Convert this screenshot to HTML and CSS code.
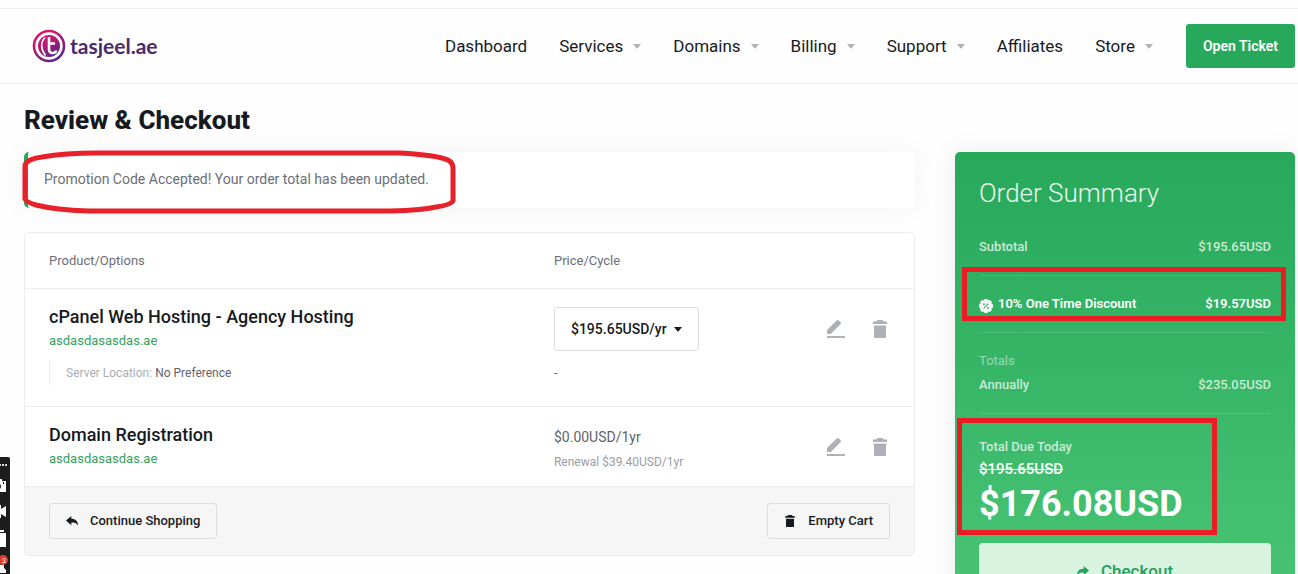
FILE: index.html
```html
<!DOCTYPE html>
<html lang="en">
<head>
<meta charset="utf-8">
<title>Review &amp; Checkout</title>
<link rel="stylesheet" href="styles.css">
</head>
<body>
<svg class="sprite" aria-hidden="true">
  <symbol id="caret" viewBox="0 0 8 5"><path d="M0 0h8L4.6 4.2a.8.8 0 0 1-1.2 0z"/></symbol>
  <symbol id="edit" viewBox="0 0 18 18"><path d="M0 16h18v2H0zM0 13.500v-3.400L9.700.5a1.500 1.500 0 0 1 2.100 0l1.700 1.700a1.500 1.500 0 0 1 0 2.100L3.800 14H.5a.5.5 0 0 1-.5-.5z"/></symbol>
  <symbol id="trash" viewBox="0 0 14 18"><path d="M0 1.500h3L4.500 0h5L11 1.500h3V4H0zM1 5.500h12V17a1 1 0 0 1-1 1H2a1 1 0 0 1-1-1z"/></symbol>
  <symbol id="reply" viewBox="0 0 12 10"><path d="M0 4.600 5.300 0v2.700C9.500 2.700 12 5 12 9.500 10.500 7 8.500 6.500 5.300 6.500v2.800z"/></symbol>
  <symbol id="badge" viewBox="0 0 14 14"><path fill="#fff" d="M5.600 0h2.800l.8 1.500 1.700-.5 2 2-.5 1.800 1.600.8v2.800l-1.600.8.5 1.800-2 2-1.700-.5-.8 1.500H5.600l-.8-1.500-1.700.5-2-2 .5-1.800L0 8.400V5.600l1.600-.8L1.100 3l2-2 1.700.5z"/><path stroke="#32b062" stroke-width="1.200" d="m4.700 9.300 4.600-4.600"/><circle cx="5" cy="5.200" r="1" fill="#32b062"/><circle cx="9" cy="8.900" r="1" fill="#32b062"/></symbol>
</svg>

<header class="topbar">
  <a class="logo" href="#">
    <svg class="logo-mark" viewBox="0 0 34 34" aria-hidden="true">
      <defs><linearGradient id="brand" x1="0" y1="0" x2=".6" y2="1"><stop offset="0" stop-color="#e5156f"/><stop offset=".5" stop-color="#b01c75"/><stop offset="1" stop-color="#5e2488"/></linearGradient></defs>
      <circle cx="17" cy="17" r="15" fill="#fff" stroke="url(#brand)" stroke-width="2.600"/>
      <circle cx="17" cy="17" r="11" fill="url(#brand)"/>
      <path d="M13 8.500C8.500 13 8.500 20 13.500 26.500" fill="none" stroke="#fff" stroke-width="1.600"/>
      <path d="M17 8v12q0 4 3.500 4T24 21.500M17 14.500h6" fill="none" stroke="#fff" stroke-width="2.600"/>
    </svg>
    <span>tasjeel.ae</span>
  </a>
  <nav class="menu">
    <a href="#">Dashboard</a>
    <a href="#">Services<svg class="caret"><use href="#caret"/></svg></a>
    <a href="#">Domains<svg class="caret"><use href="#caret"/></svg></a>
    <a href="#">Billing<svg class="caret"><use href="#caret"/></svg></a>
    <a href="#">Support<svg class="caret"><use href="#caret"/></svg></a>
    <a href="#">Affiliates</a>
    <a href="#">Store<svg class="caret"><use href="#caret"/></svg></a>
  </nav>
  <button class="ticket" type="button">Open Ticket</button>
</header>

<main class="page">
  <h1>Review &amp; Checkout</h1>
  <div class="columns">
    <section class="cart">
      <div class="alert" role="status">Promotion Code Accepted! Your order total has been updated.
        <svg class="mark mark-alert" viewBox="0 0 434 64" aria-hidden="true"><path d="M76 3H378Q414 5 426 10Q431 13 431 18V51Q429 55 414 57Q394 61 360 61H66Q34 60 14 55Q4 52 3 49V15Q5 9 20 7Q42 3 76 3Z"/></svg>
      </div>
      <div class="panel">
        <table>
          <thead><tr><th class="col-product">Product/Options</th><th>Price/Cycle</th><th class="col-actions"></th></tr></thead>
          <tbody>
            <tr>
              <td>
                <div class="name">cPanel Web Hosting - Agency Hosting</div>
                <a class="domain" href="#">asdasdasasdas.ae</a>
                <div class="option">Server Location: <span>No Preference</span></div>
              </td>
              <td>
                <div class="cycle"><select aria-label="Billing cycle"><option>$195.65USD/yr</option></select><svg class="caret"><use href="#caret"/></svg></div>
                <div class="option-price">-</div>
              </td>
              <td><div class="actions">
                <button type="button" aria-label="Edit"><svg class="edit"><use href="#edit"/></svg></button>
                <button type="button" aria-label="Remove"><svg class="trash"><use href="#trash"/></svg></button>
              </div></td>
            </tr>
            <tr class="compact">
              <td>
                <div class="name">Domain Registration</div>
                <a class="domain" href="#">asdasdasasdas.ae</a>
              </td>
              <td><div class="price">$0.00USD/1yr</div><div class="renewal">Renewal $39.40USD/1yr</div></td>
              <td><div class="actions">
                <button type="button" aria-label="Edit"><svg class="edit"><use href="#edit"/></svg></button>
                <button type="button" aria-label="Remove"><svg class="trash"><use href="#trash"/></svg></button>
              </div></td>
            </tr>
          </tbody>
        </table>
        <div class="panel-foot">
          <button type="button"><svg class="reply"><use href="#reply"/></svg>Continue Shopping</button>
          <button type="button"><svg class="bin"><use href="#trash"/></svg>Empty Cart</button>
        </div>
      </div>
    </section>

    <aside class="summary">
      <h2>Order Summary</h2>
      <div class="line"><span>Subtotal</span><span>$195.65USD</span></div>
      <div class="line discount"><span><svg class="badge"><use href="#badge"/></svg>10% One Time Discount</span><span>$19.57USD</span></div>
      <div class="totals">
        <div class="label">Totals</div>
        <div class="line"><span>Annually</span><span>$235.05USD</span></div>
      </div>
      <div class="due">
        <div>Total Due Today</div>
        <s>$195.65USD</s>
        <strong>$176.08USD</strong>
      </div>
      <button class="checkout" type="button"><svg class="forward"><use href="#reply"/></svg>Checkout</button>
      <div class="mark box-discount"></div>
      <div class="mark box-due"></div>
    </aside>
  </div>
</main>

<div class="recorder" aria-hidden="true">
  <svg viewBox="0 0 10 117">
    <path fill="#1c1c1c" d="M0 0h8a2 2 0 0 1 2 2v115H0z"/>
    <path fill="#ddd" d="M0 7h1v2H0zM2 7h2v2H2zM5 7h2v2H5z"/>
    <path fill="#fff" d="M0 22h2v2h4v11H0v-3q2-2.500 0-5zM0 48h1v4l5-3v11l-5-3v4H0zM0 73h4v2H0zM0 76h6v14H0zM0 108l4-1v4l2 2v3H0z"/>
    <path fill="#1c1c1c" d="M3 25h1v2H3z"/>
    <circle cx="3" cy="103" r="5" fill="#e8392f"/>
    <text x="2" y="106">3</text>
  </svg>
</div>
</body>
</html>
```

FILE: styles.css
```css
* { box-sizing: border-box; }

body {
  margin: 0;
  height: 100vh;
  overflow: hidden;
  background: #fefefe;
  color: #161a1e;
  font: 14px/20px Roboto, "Liberation Sans", sans-serif;
}

button, select { font: inherit; color: inherit; cursor: pointer; }
a { color: inherit; text-decoration: none; }
svg { display: block; flex: none; }
.sprite { position: absolute; width: 0; height: 0; }
.caret { width: 8px; height: 5px; fill: #aeb2b9; }

.topbar {
  display: flex;
  align-items: center;
  margin-top: 8px;
  padding: 15px 3px 15px 32px;
  border: solid #ededed;
  border-width: 1px 0;
}
.logo {
  display: flex;
  align-items: center;
  gap: 4px;
  margin-right: auto;
  color: #4a2a6c;
  font: 700 21px/24px Lato, sans-serif;
}
.logo-mark { width: 34px; height: 34px; }
.menu { display: flex; gap: 32px; margin-right: 33px; font-size: 17px; }
.menu a { display: flex; align-items: center; gap: 10px; }
.ticket {
  height: 44px;
  padding: 0 17px;
  border: 0;
  border-radius: 3px;
  background: #27a85b;
  color: #fff;
  font-weight: 600;
}

.page { padding: 20px 3px 0 24px; }
h1 { margin: 0 0 16px; font-size: 26px; line-height: 32px; font-weight: 800; }
.columns { display: grid; grid-template-columns: 1fr 340px; gap: 40px; align-items: start; }

.alert {
  position: relative;
  margin-bottom: 24px;
  padding: 17px 16px 19px;
  border-left: 4px solid #27a85b;
  border-radius: 5px;
  background: #fff;
  box-shadow: 0 0 24px rgba(0, 0, 0, .05);
  color: #6b6e75;
}
.mark { position: absolute; pointer-events: none; }
.mark-alert { top: -2px; left: -6px; width: 434px; height: 64px; fill: none; stroke: #e62129; stroke-width: 5; }

.panel { overflow: hidden; border: 1px solid #ededed; border-radius: 5px; background: #fff; }
table { width: 100%; border-collapse: collapse; table-layout: fixed; }
th, td { padding: 0; text-align: left; vertical-align: top; border-bottom: 1px solid #ededed; }
th { padding: 18px 0 17px; color: #6b6e75; font-size: 13px; font-weight: 400; }
td { padding: 18px 0 17px; }
.compact td { padding-bottom: 12px; }
th:first-child, td:first-child { padding-left: 24px; }
.col-product { width: 59.5%; }
.col-actions { width: 112px; }
.name { font-size: 18px; font-weight: 500; }
.domain { display: block; margin-top: 4px; color: #2fa360; font-size: 13px; }
.option { margin: 10px 0 4px; padding-left: 16px; border-left: 1px solid #ededed; color: #a9adb5; font-size: 12px; line-height: 24px; }
.option span { color: #5f636a; }
.option-price { margin-top: 10px; color: #5f636a; line-height: 24px; font-size: 12px; }
.cycle { position: relative; width: 145px; }
.cycle select {
  width: 100%;
  height: 44px;
  padding: 0 16px;
  appearance: none;
  border: 1px solid #dcdde0;
  border-radius: 3px;
  background: #fff;
  font-weight: 500;
}
.cycle .caret { position: absolute; right: 17px; top: 20px; fill: #161a1e; }
.price { color: #5f636a; line-height: 24px; }
.renewal { margin-top: 1px; color: #9a9da3; font-size: 12px; line-height: 24px; }
.actions { display: flex; justify-content: flex-end; align-items: center; gap: 28px; height: 44px; padding-right: 27px; }
.actions button { padding: 0; border: 0; background: none; fill: #aeb0b8; }
.edit { width: 18px; height: 18px; }
.trash { width: 14px; height: 18px; }
.panel-foot { display: flex; justify-content: space-between; padding: 16px 24px; background: #f6f6f6; }
.panel-foot button {
  display: flex;
  align-items: center;
  gap: 12px;
  height: 36px;
  padding: 0 16px;
  border: 1px solid #dcdde0;
  border-radius: 3px;
  background: none;
  font-size: 13px;
  font-weight: 500;
  fill: #161a1e;
}
.reply { width: 12px; height: 10px; }
.bin { width: 12px; height: 12px; }

.summary {
  position: relative;
  padding: 25px 24px 32px;
  border-radius: 5px;
  background: linear-gradient(#27a85b, #4bc676);
  box-shadow: 0 0 24px rgba(0, 0, 0, .08);
  color: #c9ecd6;
  font-size: 13px;
  font-weight: 500;
}
h2 { margin: 0 0 28px; color: #e9f7ee; font-size: 26px; line-height: 32px; font-weight: 300; }
.line { display: flex; justify-content: space-between; }
.line span { display: flex; align-items: center; gap: 5px; }
.discount { margin: 18px 0; padding: 18px 0; border: solid #49ba74; border-width: 1px 0; color: #fff; font-weight: 600; }
.badge { width: 14px; height: 14px; margin-top: 4px; }
.totals { padding-bottom: 18px; border-bottom: 1px solid #55c47e; }
.label { margin-bottom: 4px; color: #97d9b0; font-weight: 400; }
.due { margin-top: 23px; }
.due s, .due strong { display: block; color: #fff; }
.due s { font-size: 15px; line-height: 24px; }
.due strong { font-size: 36px; line-height: 46px; font-weight: 700; }
.checkout {
  display: flex;
  justify-content: center;
  align-items: center;
  gap: 12px;
  width: 100%;
  height: 56px;
  margin-top: 16px;
  border: 0;
  border-radius: 4px;
  background: #d8f3e0;
  color: #27a05a;
  font-size: 17px;
  font-weight: 500;
  fill: #27a05a;
}
.forward { width: 12px; height: 10px; transform: scaleX(-1); }
.box-discount, .box-due { border: 5px solid #ec1c24; }
.box-discount { top: 115px; left: 7px; width: 324px; height: 54px; }
.box-due { top: 266px; left: 2px; width: 260px; height: 117px; }

.recorder { position: fixed; left: 0; bottom: 0; width: 10px; height: 117px; }
.recorder text { fill: #fff; font: 7px Roboto, sans-serif; }
```
